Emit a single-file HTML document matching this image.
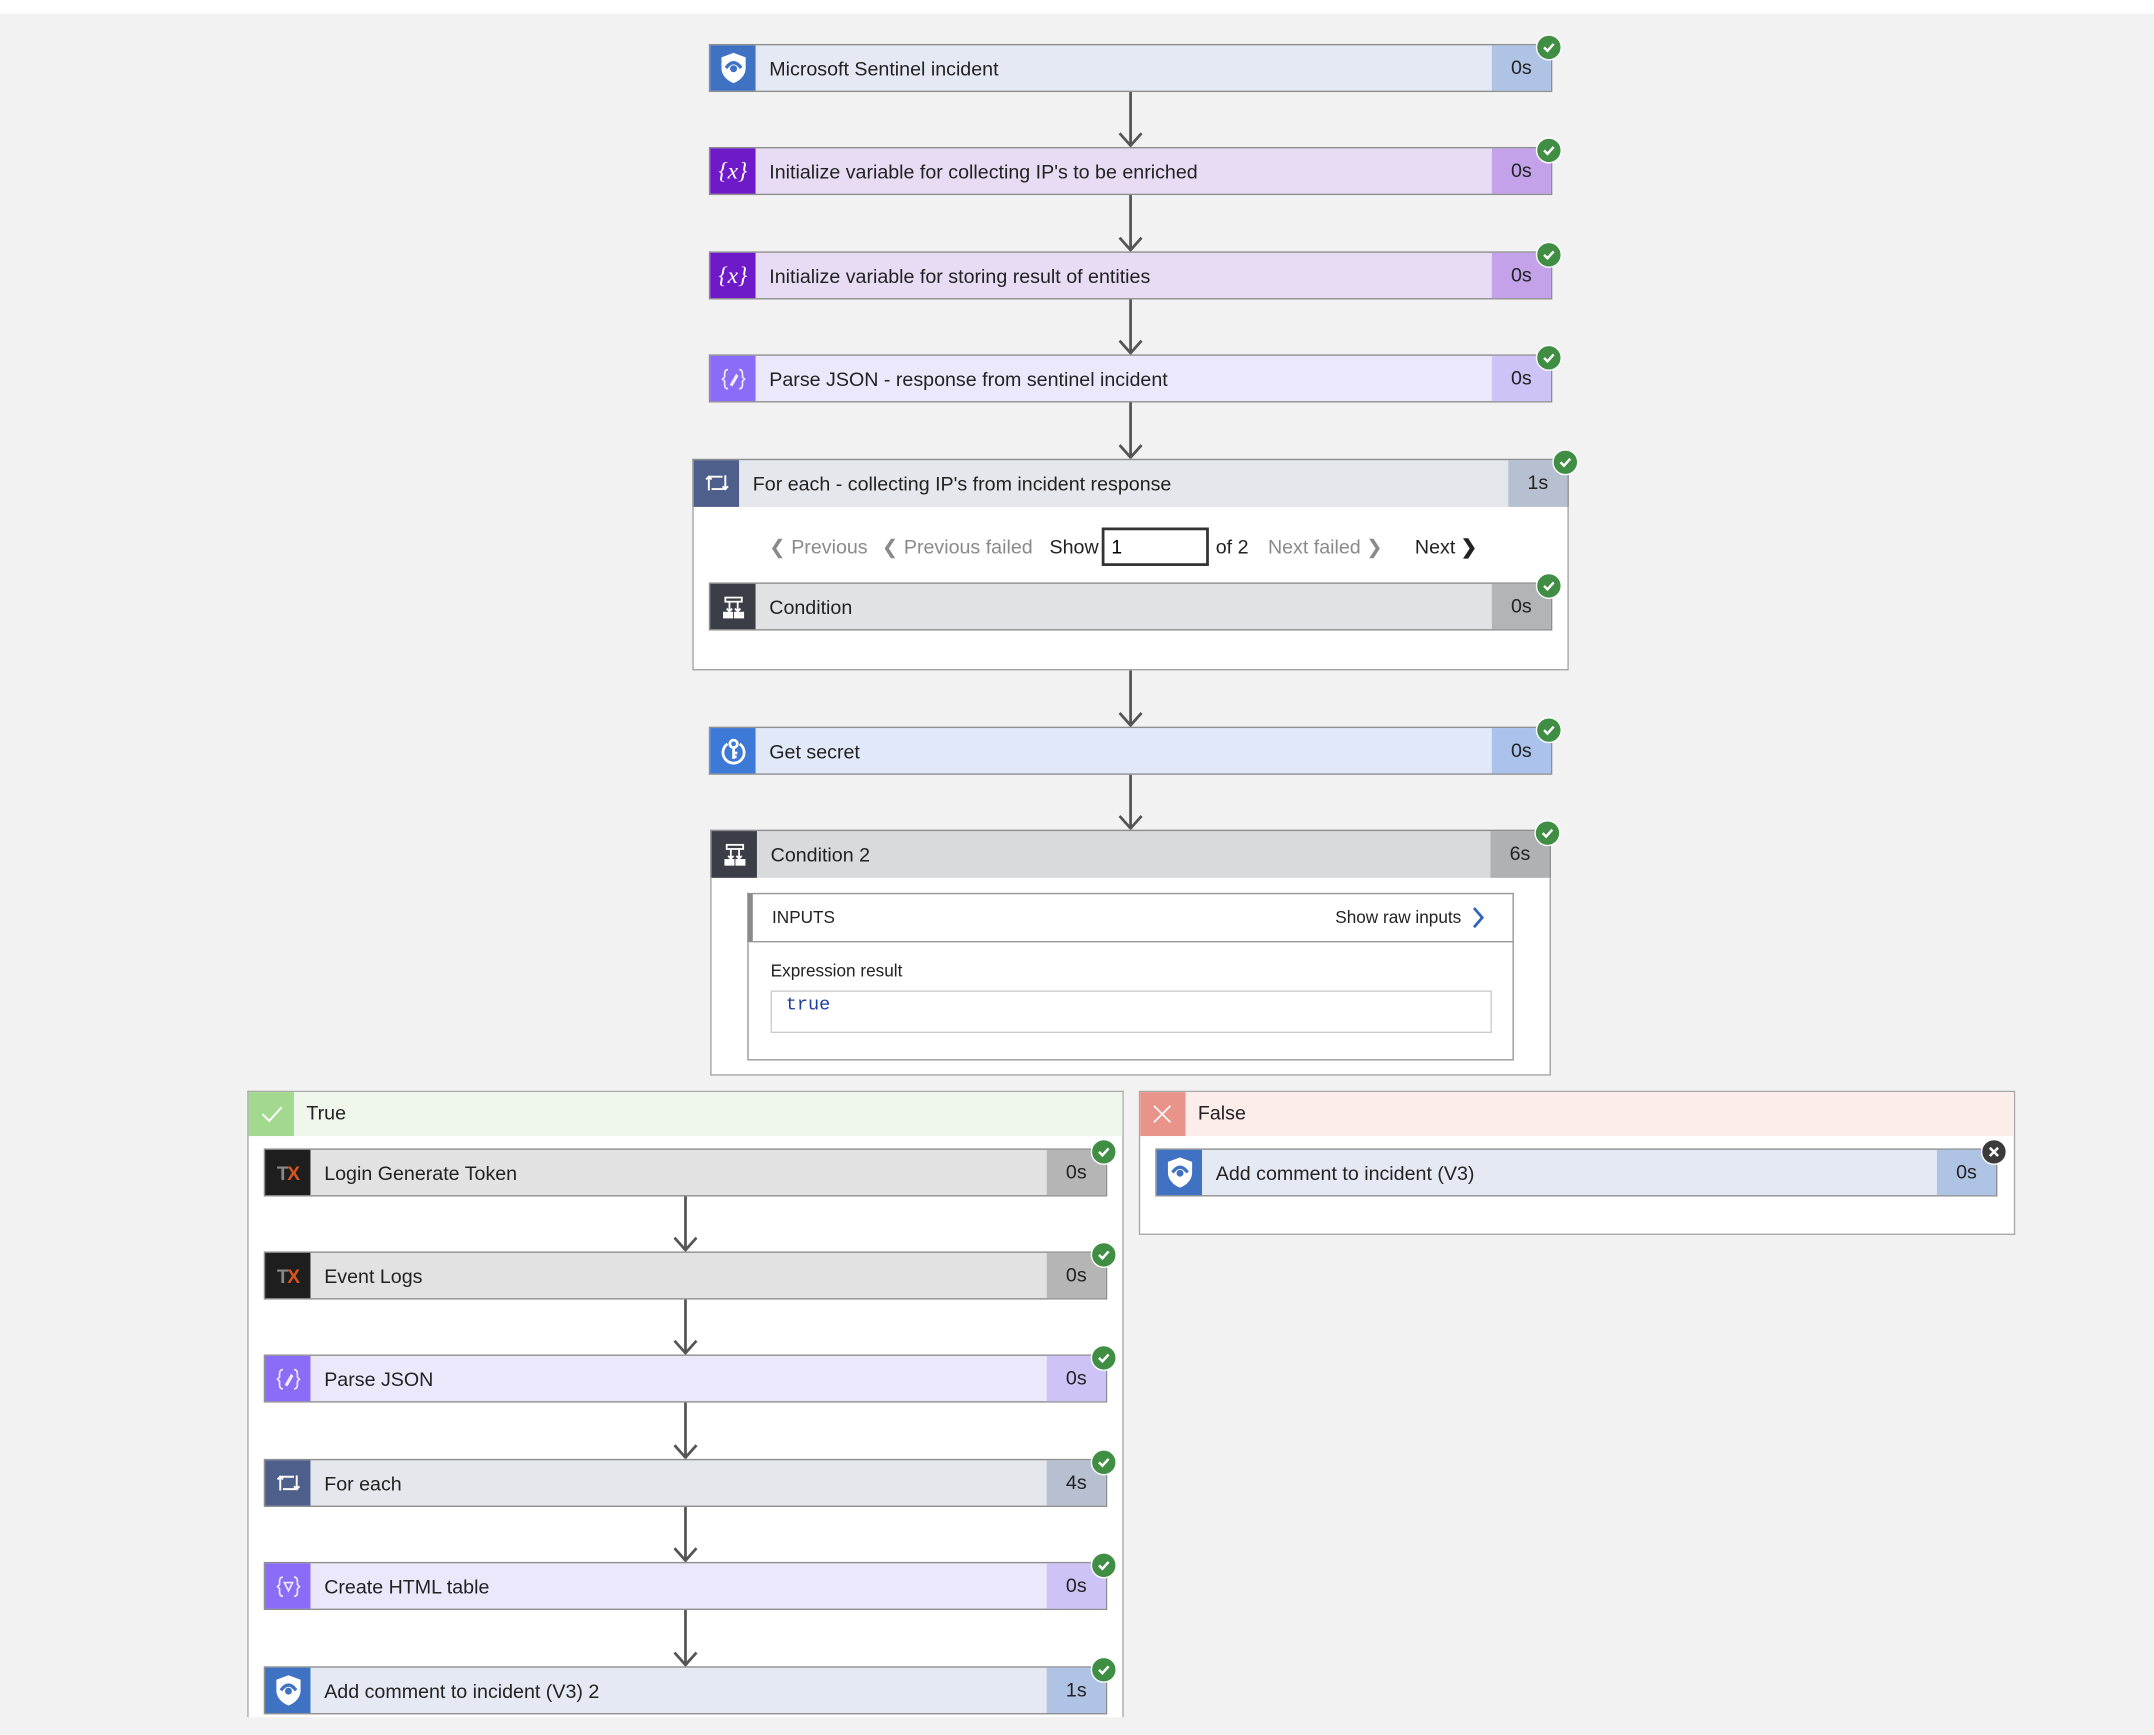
<!DOCTYPE html>
<html><head><meta charset="utf-8"><style>
html,body{margin:0;padding:0;}
body{width:2154px;height:1735px;overflow:hidden;background:#f2f2f2;font-family:"Liberation Sans",sans-serif;}
#w{position:absolute;left:0;top:0;width:1568px;height:1263px;transform:scale(1.37372);transform-origin:0 0;}
.top{position:absolute;left:0;top:0;width:1568px;height:10px;background:#fff;}
.card{position:absolute;height:35px;box-sizing:border-box;border:1.5px solid #8e8e8e;background:var(--bg);}
.card .ic{position:absolute;left:0;top:0;width:33px;height:100%;background:var(--ic);display:flex;align-items:center;justify-content:center;}
.card .t{position:absolute;left:43px;top:2px;line-height:32px;font-size:14.3px;color:#222;white-space:nowrap;}
.card .d{position:absolute;right:0;top:0;width:43px;height:100%;background:var(--du);text-align:center;line-height:34px;font-size:14.3px;color:#222;}
.ok{position:absolute;right:-8px;top:-8px;width:17px;height:17px;border-radius:50%;background:#3f8e44;border:1.5px solid #fff;box-sizing:content-box;}
.ok svg{position:absolute;left:3px;top:3px;}
.xx{position:absolute;right:-8px;top:-8px;width:17px;height:17px;border-radius:50%;background:#3b3b3b;border:1.5px solid #fff;}
.xx svg{position:absolute;left:4px;top:4px;}
.box{position:absolute;box-sizing:border-box;background:#fff;border:1.5px solid #a3a3a3;}
.pg{position:absolute;top:390px;font-size:14.3px;color:#8a8a8a;white-space:nowrap;line-height:18px;}
.blk{color:#222;}
</style></head><body><div id="w">
<div class="top"></div>

<svg style="position:absolute;left:0;top:0" width="1568" height="1263">
<g stroke="#555" stroke-width="2" fill="none">
<path d="M823 66V106M815 97L823 106L831 97"/>
<path d="M823 141V182M815 173L823 182L831 173"/>
<path d="M823 217V257M815 248L823 257L831 248"/>
<path d="M823 292V333M815 324L823 333L831 324"/>
<path d="M823 487V528M815 519L823 528L831 519"/>
<path d="M823 563V603M815 594L823 603L831 594"/>
</g></svg>

<div class="card" style="left:516px;top:32px;width:614px;--ic:#4072c4;--bg:#e4e9f4;--du:#afc3e5">
<div class="ic"><svg width="22" height="25" viewBox="0 0 20 22"><path d="M10 1L18 4V11C18 16 14 19.5 10 21C6 19.5 2 16 2 11V4Z" fill="#fff"/><path d="M5 11Q10 4 15 11" stroke="#4072c4" stroke-width="2.2" fill="none"/><circle cx="10" cy="11.5" r="2.3" fill="#4072c4"/></svg></div>
<div class="t">Microsoft Sentinel incident</div><div class="d">0s</div>
<div class="ok"><svg width="11" height="11" viewBox="0 0 11 11"><path d="M2 5.5L4.5 8L9 3" stroke="#fff" stroke-width="1.8" fill="none"/></svg></div></div>

<div class="card" style="left:516px;top:107px;width:614px;--ic:#6e1ac9;--bg:#e8dcf5;--du:#c3a2ea">
<div class="ic"><span style="color:#fff;font-family:'Liberation Serif',serif;font-size:17px;font-style:italic">{<i>x</i>}</span></div>
<div class="t">Initialize variable for collecting IP's to be enriched</div><div class="d">0s</div>
<div class="ok"><svg width="11" height="11" viewBox="0 0 11 11"><path d="M2 5.5L4.5 8L9 3" stroke="#fff" stroke-width="1.8" fill="none"/></svg></div></div>

<div class="card" style="left:516px;top:183px;width:614px;--ic:#6e1ac9;--bg:#e8dcf5;--du:#c3a2ea">
<div class="ic"><span style="color:#fff;font-family:'Liberation Serif',serif;font-size:17px;font-style:italic">{<i>x</i>}</span></div>
<div class="t">Initialize variable for storing result of entities</div><div class="d">0s</div>
<div class="ok"><svg width="11" height="11" viewBox="0 0 11 11"><path d="M2 5.5L4.5 8L9 3" stroke="#fff" stroke-width="1.8" fill="none"/></svg></div></div>

<div class="card" style="left:516px;top:258px;width:614px;--ic:#8b6cf6;--bg:#ece8fc;--du:#cec3f7">
<div class="ic"><svg width="20" height="20" viewBox="0 0 20 20" fill="none" stroke="#f0ecff" stroke-width="1.2"><path d="M6 3Q3.5 3 3.5 6V8.5L2 10L3.5 11.5V14Q3.5 17 6 17"/><path d="M14 3Q16.5 3 16.5 6V8.5L18 10L16.5 11.5V14Q16.5 17 14 17"/><path d="M8 14L12 7L12.8 7.8L9 14.5Z"/></svg></div>
<div class="t">Parse JSON - response from sentinel incident</div><div class="d">0s</div>
<div class="ok"><svg width="11" height="11" viewBox="0 0 11 11"><path d="M2 5.5L4.5 8L9 3" stroke="#fff" stroke-width="1.8" fill="none"/></svg></div></div>

<div class="box" style="left:504px;top:334px;width:638px;height:154px"></div>
<div class="card" style="left:504px;top:334px;width:638px;--ic:#4f5f8b;--bg:#e4e7ec;--du:#b7c0d0;border-bottom:none;">
<div class="ic"><svg width="20" height="20" viewBox="0 0 20 20" fill="none" stroke="#fff" stroke-width="1.4"><path d="M4 15V5H14"/><path d="M2 7L4 5L6 7"/><path d="M16 4V14H6"/><path d="M14 12L16 14L18 12"/></svg></div>
<div class="t">For each - collecting IP's from incident response</div><div class="d">1s</div>
<div class="ok"><svg width="11" height="11" viewBox="0 0 11 11"><path d="M2 5.5L4.5 8L9 3" stroke="#fff" stroke-width="1.8" fill="none"/></svg></div></div>

<div class="pg" style="left:560px">❮ Previous</div>
<div class="pg" style="left:642px">❮ Previous failed</div>
<div class="pg blk" style="left:764px">Show</div>
<div style="position:absolute;left:802px;top:384px;width:78px;height:28px;box-sizing:border-box;border:2px solid #333;background:#fff;font-size:14px;line-height:24px;padding-left:5px">1</div>
<div class="pg blk" style="left:885px">of 2</div>
<div class="pg" style="left:923px">Next failed ❯</div>
<div class="pg blk" style="left:1030px">Next <b>❯</b></div>

<div class="card" style="left:516px;top:424px;width:614px;--ic:#3b3e47;--bg:#e1e2e4;--du:#b3b4b6">
<div class="ic"><svg width="20" height="20" viewBox="0 0 20 20" fill="none" stroke="#fff" stroke-width="1.3"><rect x="4" y="3" width="12" height="3"/><path d="M7 6V13M13 6V13M5 11L7 13L9 11M11 11L13 13L15 11"/><rect x="3" y="14" width="6" height="3.5" fill="#fff"/><rect x="11" y="14" width="6" height="3.5" fill="#fff"/></svg></div>
<div class="t">Condition</div><div class="d">0s</div>
<div class="ok"><svg width="11" height="11" viewBox="0 0 11 11"><path d="M2 5.5L4.5 8L9 3" stroke="#fff" stroke-width="1.8" fill="none"/></svg></div></div>

<div class="card" style="left:516px;top:529px;width:614px;--ic:#3d7ad8;--bg:#e1e8f7;--du:#aac2ec">
<div class="ic"><svg width="22" height="22" viewBox="0 0 20 20" fill="none" stroke="#fff" stroke-width="1.8"><path d="M6 5A7 7 0 1 0 14 5"/><circle cx="10" cy="5" r="2.5"/><path d="M10 7.5V15M10 11H12.5M10 13.5H12"/></svg></div>
<div class="t">Get secret</div><div class="d">0s</div>
<div class="ok"><svg width="11" height="11" viewBox="0 0 11 11"><path d="M2 5.5L4.5 8L9 3" stroke="#fff" stroke-width="1.8" fill="none"/></svg></div></div>

<div class="box" style="left:517px;top:604px;width:612px;height:179px"></div>
<div class="card" style="left:517px;top:604px;width:612px;--ic:#3b3e47;--bg:#d9dadc;--du:#b0b1b3;border-bottom:none">
<div class="ic"><svg width="20" height="20" viewBox="0 0 20 20" fill="none" stroke="#fff" stroke-width="1.3"><rect x="4" y="3" width="12" height="3"/><path d="M7 6V13M13 6V13M5 11L7 13L9 11M11 11L13 13L15 11"/><rect x="3" y="14" width="6" height="3.5" fill="#fff"/><rect x="11" y="14" width="6" height="3.5" fill="#fff"/></svg></div>
<div class="t">Condition 2</div><div class="d">6s</div>
<div class="ok"><svg width="11" height="11" viewBox="0 0 11 11"><path d="M2 5.5L4.5 8L9 3" stroke="#fff" stroke-width="1.8" fill="none"/></svg></div></div>
<div style="position:absolute;left:544px;top:650px;width:558px;height:122px;box-sizing:border-box;border:1.5px solid #999;background:#fff"></div>
<div style="position:absolute;left:544px;top:650px;width:558px;height:36px;box-sizing:border-box;border:1.5px solid #999;border-left:4px solid #8a8a8a;background:#fff"></div>
<div style="position:absolute;left:562px;top:661px;font-size:12.5px;color:#222">INPUTS</div>
<div style="position:absolute;left:972px;top:661px;font-size:12.5px;color:#222">Show raw inputs</div>
<svg style="position:absolute;left:1070px;top:659px" width="12" height="18"><path d="M3 2L9 9L3 16" stroke="#2d62c4" stroke-width="2" fill="none"/></svg>
<div style="position:absolute;left:561px;top:700px;font-size:12.5px;color:#222">Expression result</div>
<div style="position:absolute;left:561px;top:721px;width:525px;height:31px;box-sizing:border-box;border:1px solid #ccc;background:#fff"></div>
<div style="position:absolute;left:572px;top:725px;font-family:'Liberation Mono',monospace;font-size:13.5px;color:#1f3f9c">true</div>

<div style="position:absolute;left:180px;top:794px;width:638px;height:456px;box-sizing:border-box;border:1.5px solid #a8a8a8;border-bottom:none;background:#fff"></div>
<div style="position:absolute;left:181px;top:795px;width:636px;height:32px;background:#eff7ec"></div>
<div style="position:absolute;left:181px;top:795px;width:33px;height:32px;background:#a3d98f"></div>
<svg style="position:absolute;left:188px;top:801px" width="20" height="20"><path d="M3 10L8 15L17 5" stroke="#fff" stroke-width="1.4" fill="none"/></svg>
<div style="position:absolute;left:223px;top:803px;font-size:14.3px;color:#222">True</div>

<svg style="position:absolute;left:0;top:0" width="1568" height="1263">
<g stroke="#555" stroke-width="2" fill="none">
<path d="M499 869V910M491 901L499 910L507 901"/>
<path d="M499 945V985M491 976L499 985L507 976"/>
<path d="M499 1020V1061M491 1052L499 1061L507 1052"/>
<path d="M499 1096V1136M491 1127L499 1136L507 1127"/>
<path d="M499 1171V1212M491 1203L499 1212L507 1203"/>
</g></svg>

<div class="card" style="left:192px;top:836px;width:614px;--ic:#1e1e1e;--bg:#e2e2e2;--du:#b5b5b5">
<div class="ic"><span style="font-weight:bold;font-size:14px;letter-spacing:-1px"><span style="color:#888">T</span><span style="color:#d9551f">X</span></span></div>
<div class="t">Login Generate Token</div><div class="d">0s</div>
<div class="ok"><svg width="11" height="11" viewBox="0 0 11 11"><path d="M2 5.5L4.5 8L9 3" stroke="#fff" stroke-width="1.8" fill="none"/></svg></div></div>

<div class="card" style="left:192px;top:911px;width:614px;--ic:#1e1e1e;--bg:#e2e2e2;--du:#b5b5b5">
<div class="ic"><span style="font-weight:bold;font-size:14px;letter-spacing:-1px"><span style="color:#888">T</span><span style="color:#d9551f">X</span></span></div>
<div class="t">Event Logs</div><div class="d">0s</div>
<div class="ok"><svg width="11" height="11" viewBox="0 0 11 11"><path d="M2 5.5L4.5 8L9 3" stroke="#fff" stroke-width="1.8" fill="none"/></svg></div></div>

<div class="card" style="left:192px;top:986px;width:614px;--ic:#8b6cf6;--bg:#ece8fc;--du:#cec3f7">
<div class="ic"><svg width="20" height="20" viewBox="0 0 20 20" fill="none" stroke="#f0ecff" stroke-width="1.2"><path d="M6 3Q3.5 3 3.5 6V8.5L2 10L3.5 11.5V14Q3.5 17 6 17"/><path d="M14 3Q16.5 3 16.5 6V8.5L18 10L16.5 11.5V14Q16.5 17 14 17"/><path d="M8 14L12 7L12.8 7.8L9 14.5Z"/></svg></div>
<div class="t">Parse JSON</div><div class="d">0s</div>
<div class="ok"><svg width="11" height="11" viewBox="0 0 11 11"><path d="M2 5.5L4.5 8L9 3" stroke="#fff" stroke-width="1.8" fill="none"/></svg></div></div>

<div class="card" style="left:192px;top:1062px;width:614px;--ic:#4f5f8b;--bg:#e4e7ec;--du:#b7c0d0">
<div class="ic"><svg width="20" height="20" viewBox="0 0 20 20" fill="none" stroke="#fff" stroke-width="1.4"><path d="M4 15V5H14"/><path d="M2 7L4 5L6 7"/><path d="M16 4V14H6"/><path d="M14 12L16 14L18 12"/></svg></div>
<div class="t">For each</div><div class="d">4s</div>
<div class="ok"><svg width="11" height="11" viewBox="0 0 11 11"><path d="M2 5.5L4.5 8L9 3" stroke="#fff" stroke-width="1.8" fill="none"/></svg></div></div>

<div class="card" style="left:192px;top:1137px;width:614px;--ic:#8b6cf6;--bg:#ece8fc;--du:#cec3f7">
<div class="ic"><svg width="20" height="20" viewBox="0 0 20 20" fill="none" stroke="#f0ecff" stroke-width="1.2"><path d="M6 3Q3.5 3 3.5 6V8.5L2 10L3.5 11.5V14Q3.5 17 6 17"/><path d="M14 3Q16.5 3 16.5 6V8.5L18 10L16.5 11.5V14Q16.5 17 14 17"/><path d="M7 7H13L10 13Z"/></svg></div>
<div class="t">Create HTML table</div><div class="d">0s</div>
<div class="ok"><svg width="11" height="11" viewBox="0 0 11 11"><path d="M2 5.5L4.5 8L9 3" stroke="#fff" stroke-width="1.8" fill="none"/></svg></div></div>

<div class="card" style="left:192px;top:1213px;width:614px;--ic:#4072c4;--bg:#e4e9f4;--du:#afc3e5">
<div class="ic"><svg width="22" height="25" viewBox="0 0 20 22"><path d="M10 1L18 4V11C18 16 14 19.5 10 21C6 19.5 2 16 2 11V4Z" fill="#fff"/><path d="M5 11Q10 4 15 11" stroke="#4072c4" stroke-width="2.2" fill="none"/><circle cx="10" cy="11.5" r="2.3" fill="#4072c4"/></svg></div>
<div class="t">Add comment to incident (V3) 2</div><div class="d">1s</div>
<div class="ok"><svg width="11" height="11" viewBox="0 0 11 11"><path d="M2 5.5L4.5 8L9 3" stroke="#fff" stroke-width="1.8" fill="none"/></svg></div></div>

<div style="position:absolute;left:829px;top:794px;width:638px;height:105px;box-sizing:border-box;border:1.5px solid #a8a8a8;background:#fff"></div>
<div style="position:absolute;left:830px;top:795px;width:636px;height:32px;background:#fcecea"></div>
<div style="position:absolute;left:830px;top:795px;width:33px;height:32px;background:#e8948a"></div>
<svg style="position:absolute;left:837px;top:802px" width="18" height="18"><path d="M3 3L15 15M15 3L3 15" stroke="#fff" stroke-width="1.2"/></svg>
<div style="position:absolute;left:872px;top:803px;font-size:14.3px;color:#222">False</div>

<div class="card" style="left:841px;top:836px;width:613px;--ic:#4072c4;--bg:#e4e9f4;--du:#afc3e5">
<div class="ic"><svg width="22" height="25" viewBox="0 0 20 22"><path d="M10 1L18 4V11C18 16 14 19.5 10 21C6 19.5 2 16 2 11V4Z" fill="#fff"/><path d="M5 11Q10 4 15 11" stroke="#4072c4" stroke-width="2.2" fill="none"/><circle cx="10" cy="11.5" r="2.3" fill="#4072c4"/></svg></div>
<div class="t">Add comment to incident (V3)</div><div class="d">0s</div>
<div class="xx"><svg width="9" height="9" viewBox="0 0 9 9"><path d="M1.5 1.5L7.5 7.5M7.5 1.5L1.5 7.5" stroke="#fff" stroke-width="1.8"/></svg></div></div>

</div></body></html>
